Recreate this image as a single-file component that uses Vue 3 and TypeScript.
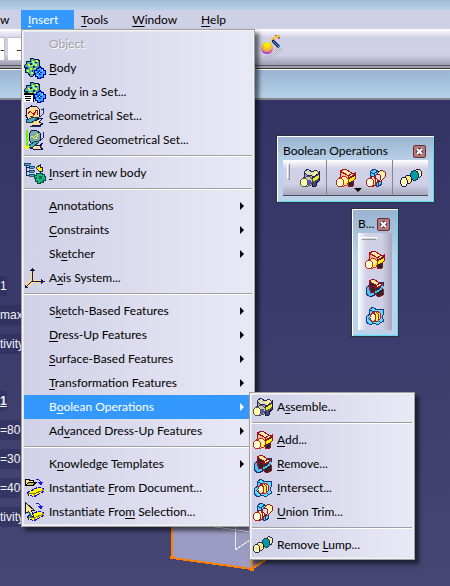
<script setup lang="ts">
import { computed } from 'vue'

interface Entry {
  label?: string
  icon?: string
  disabled?: boolean
  submenu?: boolean
  separator?: boolean
}

interface LabelParts {
  before: string
  key: string
  after: string
}

const insertMenu: Entry[] = [
  { label: 'Object', disabled: true },
  { label: '&Body', icon: 'body' },
  { label: 'Bod&y in a Set...', icon: 'body-set' },
  { label: '&Geometrical Set...', icon: 'geo-set' },
  { label: 'O&rdered Geometrical Set...', icon: 'ordered-set' },
  { separator: true },
  { label: '&Insert in new body', icon: 'insert-body' },
  { separator: true },
  { label: '&Annotations', submenu: true },
  { label: '&Constraints', submenu: true },
  { label: 'Sk&etcher', submenu: true },
  { label: 'A&xis System...', icon: 'axis' },
  { separator: true },
  { label: 'S&ketch-Based Features', submenu: true },
  { label: '&Dress-Up Features', submenu: true },
  { label: '&Surface-Based Features', submenu: true },
  { label: '&Transformation Features', submenu: true },
  { label: 'B&oolean Operations', submenu: true },
  { label: 'Ad&vanced Dress-Up Features', submenu: true },
  { separator: true },
  { label: 'K&nowledge Templates', submenu: true },
  { label: 'Instantiate &From Document...', icon: 'from-document' },
  { label: 'Instantiate Fro&m Selection...', icon: 'from-selection' },
]

const booleanMenu: Entry[] = [
  { label: 'A&ssemble...', icon: 'assemble' },
  { separator: true },
  { label: '&Add...', icon: 'add' },
  { label: '&Remove...', icon: 'remove' },
  { label: '&Intersect...', icon: 'intersect' },
  { label: '&Union Trim...', icon: 'trim' },
  { separator: true },
  { label: 'Remove &Lump...', icon: 'lump' },
]

const topMenus = ['&Tools', '&Window', '&Help']
const treeGroups: string[][] = [
  ['1', 'max', 'tivity'],
  ['1', '=80', '=30', '=40', 'tivity'],
]
const openLabel = 'B&oolean Operations'

function parts(label: string): LabelParts {
  const at = label.indexOf('&')
  if (at < 0) return { before: label, key: '', after: '' }
  return { before: label.slice(0, at), key: label[at + 1], after: label.slice(at + 2) }
}

const toParts = (list: Entry[]) => list.map((e) => ({ ...e, text: parts(e.label ?? '') }))
const insertEntries = computed(() => toParts(insertMenu))
const booleanEntries = computed(() => toParts(booleanMenu))
const topEntries = computed(() => topMenus.map(parts))
</script>

<template>
  <div class="app">
    <svg class="defs" aria-hidden="true">
      <defs>
        <radialGradient id="ball" cx="50%" cy="25%" r="75%">
          <stop offset="0.2" stop-color="#ffee00" />
          <stop offset="0.7" stop-color="#e89a60" />
          <stop offset="1" stop-color="#a000f0" />
        </radialGradient>
        <pattern id="dither" width="2" height="2" patternUnits="userSpaceOnUse">
          <path d="M0 0h1v1h-1zM1 1h1v1h-1z" fill="#b9b8c4" />
        </pattern>
        <symbol id="gears" viewBox="0 0 22 22">
          <path d="M6 2l3-1 2 2 3-1 2 3-1 3 2 3-3 2 0 3-3 0-2 3-3 0-2-3-3-1 1-3-2-3 2-2 0-3 4 0z" fill="#43b5a4" stroke="#001a4d" />
          <path d="M4 7h2v2h-2zM8 4h2v2h-2zM11 7h2v2h-2zM6 11h2v2h-2zM3 13h2v2h-2zM10 11h2v1h-2zM12 3h2v2h-2zM7 15h2v2h-2zM7 8h2v1h-2z" fill="#fff200" />
          <path d="M6 6h2v2h-2zM9 9h2v2h-2zM8 13h1v2h-1zM2 10h2v2h-2zM11 5h2v1h-2z" fill="#002b5c" />
          <path d="M5 9h2v1h-2zM9 6h2v2h-2z" fill="#75f5ff" />
          <path d="M14 10h3v1h2v2h2v4h-2v3h-3v1h-3v-2h-2v-3h-1v-3h2v-2h2z" fill="#37a8ff" stroke="#0000a8" />
          <path d="M15 13v5M13 15.500h5M13 13l4 5" stroke="#0020d0" fill="none" />
          <path d="M15 15h1v1h-1zM18 13h1v1h-1zM13 18h1v1h-1z" fill="#dffcff" />
        </symbol>
        <symbol id="body" viewBox="0 0 22 22"><use href="#gears" /></symbol>
        <symbol id="body-set" viewBox="0 0 22 22">
          <use href="#gears" />
          <path d="M0 12h9v9h-9z" fill="#fff" />
          <path d="M0 12h10v2h-10zM1 15h6v1h-6zM1 17h6v1h-6zM2 19h4v1h-4zM9 13h1v8h-1z" fill="#000" />
        </symbol>
        <symbol id="geo-set" viewBox="0 0 22 22">
          <path d="M2.500 4l2-1 3-2 5 .500 3 3 .500 6-3 4-4 1-5-1-2-4z" fill="#ffdf91" stroke="#101060" />
          <path d="M4 9q2-4 4-1t4-3M6 11l2 1 4-5M12 5q3 1 1 5" fill="none" stroke="#b01818" />
          <path d="M2 17l5-3 5 2 4-3 3 0-4 4 4 2-5 2-6-1" fill="#ffdf91" stroke="#101060" />
          <path d="M2 15l8-3 4 1-7 5-5-1z" fill="#4fa6bd" stroke="#08465c" />
          <path d="M16 12q4-2 4-9M17 4l3 1M6 21h11" fill="none" stroke="#1d2c70" />
        </symbol>
        <symbol id="ordered-set" viewBox="0 0 22 22">
          <path d="M5 6l2-4 5-1 4 3v7l-4 4-5-1-2-4z" fill="#79aaa1" stroke="#101060" />
          <path d="M6 9q2-3 4 0t4-4M9 9l4-4" fill="none" stroke="#f0ed62" />
          <path d="M4 18l5-2 6 1 4-3-3 4 3 2-5 1-5-1z" fill="#ffdf91" stroke="#101060" />
          <path d="M5 16l7-4 3 1-6 5-4 1z" fill="#58a8b5" stroke="#08465c" />
          <path d="M16 12q4-2 4-9" fill="none" stroke="#1d2c70" />
          <path d="M2 1h2v17h-2z" fill="#65f000" />
          <path d="M0 17h6l-3 4z" fill="#ffff00" />
        </symbol>
        <symbol id="insert-body" viewBox="0 0 22 22">
          <path d="M2.500 1v13M2 5.500h4M2 9.500h4M2 13.500h4" fill="none" stroke="#112b5e" />
          <path d="M0 1h6v2h-6zM5 4h5v2h-5zM5 8h5v2h-5zM5 12h5v2h-5z" fill="#35b7d3" stroke="#12305c" stroke-width=".8" />
          <path d="M12 6l4-3v2h2v4h-2v1z" fill="#fff200" stroke="#22205a" />
          <path d="M14 11h4v1h2v2h1v4h-2v2h-3v1h-3v-2h-2v-3h-1v-3h2v-2h2z" fill="#1db780" stroke="#074d45" />
          <path d="M15 14h3v3h-3zM12 15h1v2h-1zM18 18h1v1h-1z" fill="#087052" />
        </symbol>
        <symbol id="axis" viewBox="0 0 22 22">
          <path d="M8 3v11h11M8 14l-6 6" fill="none" stroke="#ffdc85" stroke-width="3" />
          <path d="M8.500 2v12.500h10M8 14l-6 6" fill="none" stroke="#14145f" />
          <path d="M6 4l2.500-3 2.500 3zM17 12l4 2.500-4 2.500zM1 18v3h4z" fill="#14145f" />
        </symbol>
        <symbol id="slab" viewBox="0 0 22 22">
          <path d="M3.500 15.500l10-5 6 1v3l-9 5-6-1z" fill="#ffff00" stroke="#1500e0" stroke-dasharray="3 1" />
          <path d="M4 16l6 1 9-4M10 17v2" fill="none" stroke="#80752a" />
          <path d="M12 2q4 0 5 4" fill="none" stroke="#1616f0" />
          <path d="M14 5h5l-2 4z" fill="#1616f0" />
        </symbol>
        <symbol id="from-document" viewBox="0 0 22 22">
          <use href="#slab" />
          <path d="M1.500 8v-6h3l1 1h4v2h3l-3 3z" fill="#ffec78" stroke="#000" />
          <path d="M2 8l3-3h7l-3 3z" fill="#c8bc5b" stroke="#000" />
        </symbol>
        <symbol id="from-selection" viewBox="0 0 22 22">
          <use href="#slab" />
          <path d="M1.500 1.500v11l3-2 3 6 2-1-2-6h3z" fill="#ffe98c" stroke="#15153c" />
          <path d="M5 11l3 6" stroke="#087878" stroke-width="2" />
        </symbol>
        <symbol id="assemble" viewBox="0 0 20 20">
          <path d="M12 9l7-5v9l-3 2v3l-4 1z" fill="#4b4b5c" stroke="#17174f" />
          <path d="M4 4v5l5 3 5-3-5-3z" fill="#a5a5ae" stroke="#26265a" />
          <path d="M4 4l4-3 4 3 4-2 3 3-5 4-4-2-2 1z" fill="#dcdcb8" stroke="#26265a" />
          <path d="M12 6l4-3 2 2-4 3z" fill="#fff08a" />
          <path d="M9 13l10-6v3l-8 5z" fill="#f3ec20" />
          <path d="M3 10l6-2 4 4-2 5-6 2z" fill="#c9c9a4" stroke="#4a4a60" />
          <path d="M8 12h3v4l-3 2z" fill="#5555b4" />
          <ellipse cx="4" cy="14.500" rx="3.500" ry="4" fill="#ffffa8" stroke="#55555c" />
        </symbol>
        <symbol id="add" viewBox="0 0 20 20">
          <path d="M12 10l7-5v6l-2 1v6l-5 1z" fill="#26262e" stroke="#a3101c" />
          <path d="M4 4v5l5 3 6-3-6-4z" fill="#f0b98c" stroke="#a3101c" />
          <path d="M4 3l5-2 7 4-3 3z" fill="#ffeab0" stroke="#a3101c" />
          <path d="M12 8l5-3 2 1-6 4z" fill="#ffeb9c" stroke="#a3101c" />
          <path d="M9 13l10-5v3l-8 5z" fill="#ffec00" />
          <path d="M3 10l6-2 4 4-2 5-6 2z" fill="#fff196" stroke="#c42b23" />
          <path d="M8 16l4-3v2l-4 2z" fill="#ffec00" />
          <ellipse cx="4" cy="14.500" rx="3.500" ry="4" fill="#fffbcf" stroke="#c42b23" />
        </symbol>
        <symbol id="remove" viewBox="0 0 20 20">
          <path d="M5 7l-3 2-1 7 4 3 5-2z" fill="#49c4ee" stroke="#173477" />
          <path d="M14 4h5l-1 5-3 3z" fill="#49c4ee" stroke="#173477" />
          <path d="M4 3l4-2 8 5-1 4 3 1v6l-5 2-3-4-4-1-2-5z" fill="#27272d" stroke="#a11020" />
          <path d="M4 3l4-2 7 4-3 3z" fill="#ffe7a3" stroke="#a11020" />
          <path d="M11 8l4-3 3 1-6 4z" fill="#ffeb9c" stroke="#a11020" />
          <ellipse cx="8" cy="11.500" rx="3" ry="3.500" fill="#27272d" stroke="#a11020" />
          <path d="M10 14q4 0 8-6" fill="none" stroke="#42c5ed" stroke-width="2" />
        </symbol>
        <symbol id="intersect" viewBox="0 0 20 20">
          <path d="M4 4l4-3 4 3 6-1 1 4-2 4 2 4-4 2-2 2-4-2-4 2-4-3 1-6 3-2z" fill="#59dcff" stroke="#173a87" />
          <path d="M5 4l4 2M3 12l5 5M14 15l2 2" fill="none" stroke="#173a87" />
          <path d="M7 7l5-2 3 2 1 5-3 3-5 1z" fill="#ffe94e" stroke="#b02028" />
          <ellipse cx="8" cy="11.500" rx="3" ry="4" fill="#fff7c2" stroke="#b02028" />
          <path d="M11 6q4 2 2 8" fill="none" stroke="#b02028" />
        </symbol>
        <symbol id="trim" viewBox="0 0 20 20">
          <path d="M4 4l4-3 4 2v5l-5 2-3-2zM9 12l6-1 1 5-4 3-3-2z" fill="#59d4f4" stroke="#173a87" />
          <path d="M4 4l4 2 4-3M8 6v4M12 14v5" fill="none" stroke="#173a87" />
          <path d="M11 6l4-4 4 2v5l-4 4-4 0z" fill="#fff0aa" stroke="#8f1825" />
          <ellipse cx="12" cy="9.500" rx="2.500" ry="3.500" fill="#d8d8ee" stroke="#8f1825" />
          <path d="M4 10l4-2 4 4-2 5-5 2z" fill="#ffed9c" stroke="#a01c25" />
          <ellipse cx="4" cy="14.500" rx="3.500" ry="4" fill="#ffffd8" stroke="#b01c20" />
          <path d="M8 9q3 3 1 8" fill="none" stroke="#a01c25" />
        </symbol>
        <symbol id="lump" viewBox="0 0 22 20">
          <ellipse cx="18" cy="5.500" rx="3.500" ry="4.500" fill="#ffefa0" stroke="#17174c" />
          <ellipse cx="14.500" cy="7.500" rx="4" ry="5" fill="#009ba5" stroke="#12344e" />
          <ellipse cx="8" cy="11.500" rx="3.500" ry="4.500" fill="#ffec7d" stroke="#17174c" />
          <ellipse cx="4" cy="14" rx="3.500" ry="4.500" fill="#fffccc" stroke="#17174c" />
          <ellipse cx="4" cy="14" rx="1.500" ry="2.500" fill="#ffea83" />
        </symbol>
      </defs>
    </svg>

    <div class="titlebar"></div>

    <nav class="menubar">
      <button class="top cut" type="button">w</button>
      <div class="anchor">
        <button class="top active" type="button"><span><u>I</u>nsert</span></button>
        <div class="menu main-menu" role="menu">
          <template v-for="(e, i) in insertEntries" :key="i">
            <hr v-if="e.separator" />
            <div v-else class="row">
              <button
                class="item"
                type="button"
                role="menuitem"
                :class="{ open: e.label === openLabel }"
                :disabled="e.disabled"
              >
                <svg v-if="e.icon" class="icon"><use :href="'#' + e.icon" /></svg>
                <span class="label">{{ e.text.before }}<u>{{ e.text.key }}</u>{{ e.text.after }}</span>
                <span v-if="e.submenu" class="arrow"></span>
              </button>
              <div v-if="e.label === openLabel" class="menu sub-menu" role="menu">
                <template v-for="(s, j) in booleanEntries" :key="j">
                  <hr v-if="s.separator" />
                  <button v-else class="item" type="button" role="menuitem">
                    <svg class="icon solid"><use :href="'#' + s.icon" /></svg>
                    <span class="label">{{ s.text.before }}<u>{{ s.text.key }}</u>{{ s.text.after }}</span>
                  </button>
                </template>
              </div>
            </div>
          </template>
        </div>
      </div>
      <button v-for="t in topEntries" :key="t.key" class="top" type="button">
        <span>{{ t.before }}<u>{{ t.key }}</u>{{ t.after }}</span>
      </button>
    </nav>

    <div class="toolbar">
      <div class="fields"><span class="field">-</span><span class="field wide">—</span></div>
      <button class="wand" type="button" aria-label="Apply material">
        <svg viewBox="0 0 24 26">
          <path d="M3 22l7-2 8-8 5 3-4 5-5 2-3 3h-8z" fill="url(#dither)" />
          <circle cx="7" cy="14" r="6" fill="url(#ball)" />
          <path d="M12 6l7 7" stroke="#08155e" stroke-width="3" />
          <path d="M13 7l6 6" stroke="#32bde0" stroke-width="1" />
          <path d="M11 4h3v-2h3v2h-2v2h-3v2h-1zM17 1h3v2h-2v1h-1z" fill="#f3c82f" />
          <path d="M15 1h2v1h-2zM18 3h2v2h-2zM13 5h1v1h-1z" fill="#c05ea2" />
        </svg>
      </button>
    </div>
    <div class="docbar"></div>

    <main class="viewport">
      <div v-for="(group, g) in treeGroups" :key="g" class="tree">
        <span v-for="(node, n) in group" :key="n" class="node" :class="{ current: g === 1 && n === 0 }">{{ node }}</span>
      </div>

      <svg class="solid-view" viewBox="0 0 100 60" aria-hidden="true">
        <path d="M2 0v42l80 11v-53z" fill="#9c9bc3" />
        <path d="M82 53l16-12v-41h-16z" fill="#77779f" />
        <path d="M45 11l38 5M65 10v24l18-12" fill="none" stroke="#e9e9f4" />
        <path d="M2 0v42l80 11 16-11M82 0v53" fill="none" stroke="#ff8000" stroke-width="2" />
        <path d="M0 40h4v3h-4zM80 52h4v3h-4z" fill="#ff8000" />
      </svg>

      <section class="palette wide-palette">
        <header><span class="caption">Boolean Operations</span>
          <button class="close" type="button" aria-label="Close">
            <svg viewBox="0 0 11 11"><path d="M3 3l5 5M8 3l-5 5" stroke="#4d3f46" stroke-width="4" /><path d="M3 3l5 5M8 3l-5 5" stroke="#fff" stroke-width="2" /></svg>
          </button>
        </header>
        <div class="tools">
          <div class="cell first"><i class="grip"></i>
            <button class="tool" type="button" aria-label="Assemble"><svg class="icon solid"><use href="#assemble" /></svg></button>
          </div>
          <div class="cell pair">
            <button class="tool" type="button" aria-label="Add"><svg class="icon solid"><use href="#add" /></svg><i class="drop"></i></button>
            <button class="tool" type="button" aria-label="Union Trim"><svg class="icon solid"><use href="#trim" /></svg></button>
          </div>
          <div class="cell last">
            <button class="tool" type="button" aria-label="Remove Lump"><svg class="icon lump"><use href="#lump" /></svg></button>
          </div>
        </div>
      </section>

      <section class="palette tall-palette">
        <header><span class="caption">B...</span>
          <button class="close" type="button" aria-label="Close">
            <svg viewBox="0 0 11 11"><path d="M3 3l5 5M8 3l-5 5" stroke="#4d3f46" stroke-width="4" /><path d="M3 3l5 5M8 3l-5 5" stroke="#fff" stroke-width="2" /></svg>
          </button>
        </header>
        <div class="stack"><i class="grip"></i>
          <button class="tool" type="button" aria-label="Add"><svg class="icon solid"><use href="#add" /></svg></button>
          <button class="tool" type="button" aria-label="Remove"><svg class="icon solid"><use href="#remove" /></svg></button>
          <button class="tool" type="button" aria-label="Intersect"><svg class="icon solid"><use href="#intersect" /></svg></button>
        </div>
      </section>
    </main>
  </div>
</template>

<style>
body {
  overflow: hidden;
}
</style>

<style scoped>
.app {
  display: flex;
  flex-direction: column;
  min-height: 100vh;
  overflow: hidden;
  font-family: Lato, "Open Sans", sans-serif;
  font-size: 12px;
  line-height: 16px;
  color: #000;
}
.app * {
  box-sizing: border-box;
}
.defs {
  position: absolute;
  width: 0;
  height: 0;
}
button {
  font: inherit;
  color: inherit;
  border: 0;
  padding: 0;
  margin: 0;
  background: none;
}
u {
  text-decoration: underline;
  text-decoration-thickness: 1px;
  text-underline-offset: 2px;
  text-decoration-skip-ink: none;
}
.titlebar {
  height: 10px;
  background: linear-gradient(#a3bdd7, #b6d1e8);
}
.menubar {
  display: flex;
  height: 19px;
  background: #cfcfe5;
  position: relative;
  z-index: 2;
}
.anchor {
  position: relative;
  width: 53px;
}
.top {
  height: 19px;
  padding: 0 12px;
  display: flex;
  align-items: center;
  white-space: nowrap;
}
.top.cut {
  width: 21px;
  padding: 0;
}
.top.active {
  width: 100%;
  padding: 0 7px;
  background: #3399ff;
  color: #fff;
}
.anchor + .top {
  padding-left: 7px;
}
.menu {
  position: absolute;
  padding: 2px;
  border: 1px solid #a0a0a0;
  background: linear-gradient(90deg, #d0d0e7, #e9e9f6);
  box-shadow: inset 0 0 0 1px #f4f4f4, inset 0 0 0 2px #e7e7ef, 4px 4px 4px rgba(0, 0, 0, 0.55);
}
.main-menu {
  left: 0;
  top: 19px;
  width: 234px;
}
.sub-menu {
  left: 225px;
  top: -3px;
  width: 166px;
}
.row {
  position: relative;
}
.item {
  display: flex;
  align-items: center;
  width: 100%;
  height: 24px;
  padding-left: 25px;
  position: relative;
  text-align: left;
  white-space: nowrap;
}
.item .icon {
  position: absolute;
  left: 0;
  top: 1px;
}
.item .icon.solid {
  left: 1px;
  top: 2px;
}
.item:disabled {
  color: #a0a0a4;
  text-shadow: 1px 1px 0 #fff;
}
.item.open {
  background: #3399ff;
  color: #fff;
}
.icon {
  width: 22px;
  height: 22px;
  flex: none;
  shape-rendering: crispEdges;
}
.icon.solid {
  width: 20px;
  height: 20px;
}
.arrow {
  margin-left: auto;
  margin-right: 8px;
  border: 4px solid transparent;
  border-left-color: currentColor;
  border-right-width: 0;
}
hr {
  height: 9px;
  margin: 0;
  padding: 0;
  border: 0;
  background: linear-gradient(transparent 3px, #a0a0a4 3px, #a0a0a4 4px, #fff 4px, #fff 5px, transparent 5px);
}
.toolbar {
  height: 36px;
  display: flex;
  justify-content: space-between;
  background: linear-gradient(#fff, #cfcfe5 9px, #cfcfe5 26px, #9e9db2);
}
.fields {
  display: flex;
  gap: 3px;
  padding-top: 8px;
}
.field {
  width: 5px;
  height: 24px;
  line-height: 24px;
  background: #fff;
  border: 1px solid #c0c0cc;
  border-left: 0;
}
.field.wide {
  width: 40px;
  padding-left: 8px;
}
.wand {
  width: 24px;
  margin-right: 166px;
}
.wand svg {
  display: block;
  width: 24px;
  height: 26px;
}
.docbar {
  height: 35px;
  border-top: 1px solid #555560;
  border-bottom: 2px solid #84868d;
  background: linear-gradient(#a2a2ae 2px, #333338 2px, #333338 3px, #fff 3px, #fff 4px, #9ab4d1 4px, #b6d1e9);
}
.viewport {
  position: relative;
  flex: 1;
  padding-top: 176px;
  background: linear-gradient(#333366, #464673);
  min-height: 486px;
}
.tree {
  display: flex;
  flex-direction: column;
  align-items: flex-start;
  gap: 9px;
  margin-bottom: 37px;
  font-family: "Liberation Sans", sans-serif;
  color: #f4f4fa;
}
.node {
  height: 20px;
  line-height: 20px;
  background: rgba(42, 42, 88, 0.5);
  white-space: nowrap;
}
.node.current {
  font-weight: bold;
  text-decoration: underline;
}
.solid-view {
  position: absolute;
  left: 170px;
  top: 416px;
  width: 100px;
  height: 60px;
  shape-rendering: crispEdges;
}
.palette {
  position: absolute;
  padding: 6px;
  border: 1px solid #303038;
  background: linear-gradient(#99b3cf, #bbd3ea 40%);
  box-shadow: inset 1px 1px 0 #fff, inset -1px -1px 0 #5edaf4;
}
.wide-palette {
  left: 276px;
  top: 35px;
  width: 159px;
}
.tall-palette {
  left: 351px;
  top: 108px;
  width: 48px;
}
.palette header {
  display: flex;
  justify-content: space-between;
  align-items: center;
  height: 18px;
}
.caption {
  white-space: nowrap;
}
.close {
  width: 13px;
  height: 13px;
  margin-right: 2px;
  border: 1px solid #63303a;
  border-radius: 2px;
  background: #ba7777;
  flex: none;
}
.close svg {
  display: block;
  width: 11px;
  height: 11px;
}
.tools {
  display: flex;
  height: 36px;
}
.cell {
  display: flex;
  align-items: center;
  border-bottom: 1px solid #4b4b55;
  border-right: 1px solid #85858f;
  background: linear-gradient(#fff, #d0d0e7 9px, #cfcfe5 24px, #a8a8bd);
}
.cell.first {
  width: 44px;
}
.cell.pair {
  flex: 1;
  padding-left: 9px;
  gap: 10px;
}
.cell.last {
  width: 35px;
  padding-left: 7px;
  border-right: 0;
}
.cell .grip {
  align-self: flex-start;
  flex: none;
  width: 3px;
  height: 17px;
  margin: 3px 10px 0 4px;
  border: 1px solid #fff;
  border-right-color: #96969f;
  border-bottom-color: #96969f;
}
.tool {
  position: relative;
  display: block;
}
.tool .icon {
  display: block;
}
.drop {
  position: absolute;
  right: -6px;
  bottom: -4px;
  border: 4px solid transparent;
  border-top-color: #000;
  border-bottom-width: 0;
}
.stack {
  display: flex;
  flex-direction: column;
  align-items: center;
  gap: 8px;
  padding: 4px 0;
  background: linear-gradient(90deg, #fff, #d0d0e7 8px, #cfcfe5 24px, #a8a8bd);
}
.stack .grip {
  align-self: flex-start;
  width: 16px;
  height: 3px;
  margin: 0 0 2px 3px;
  border: 1px solid #fff;
  border-bottom-color: #96969f;
}
</style>
